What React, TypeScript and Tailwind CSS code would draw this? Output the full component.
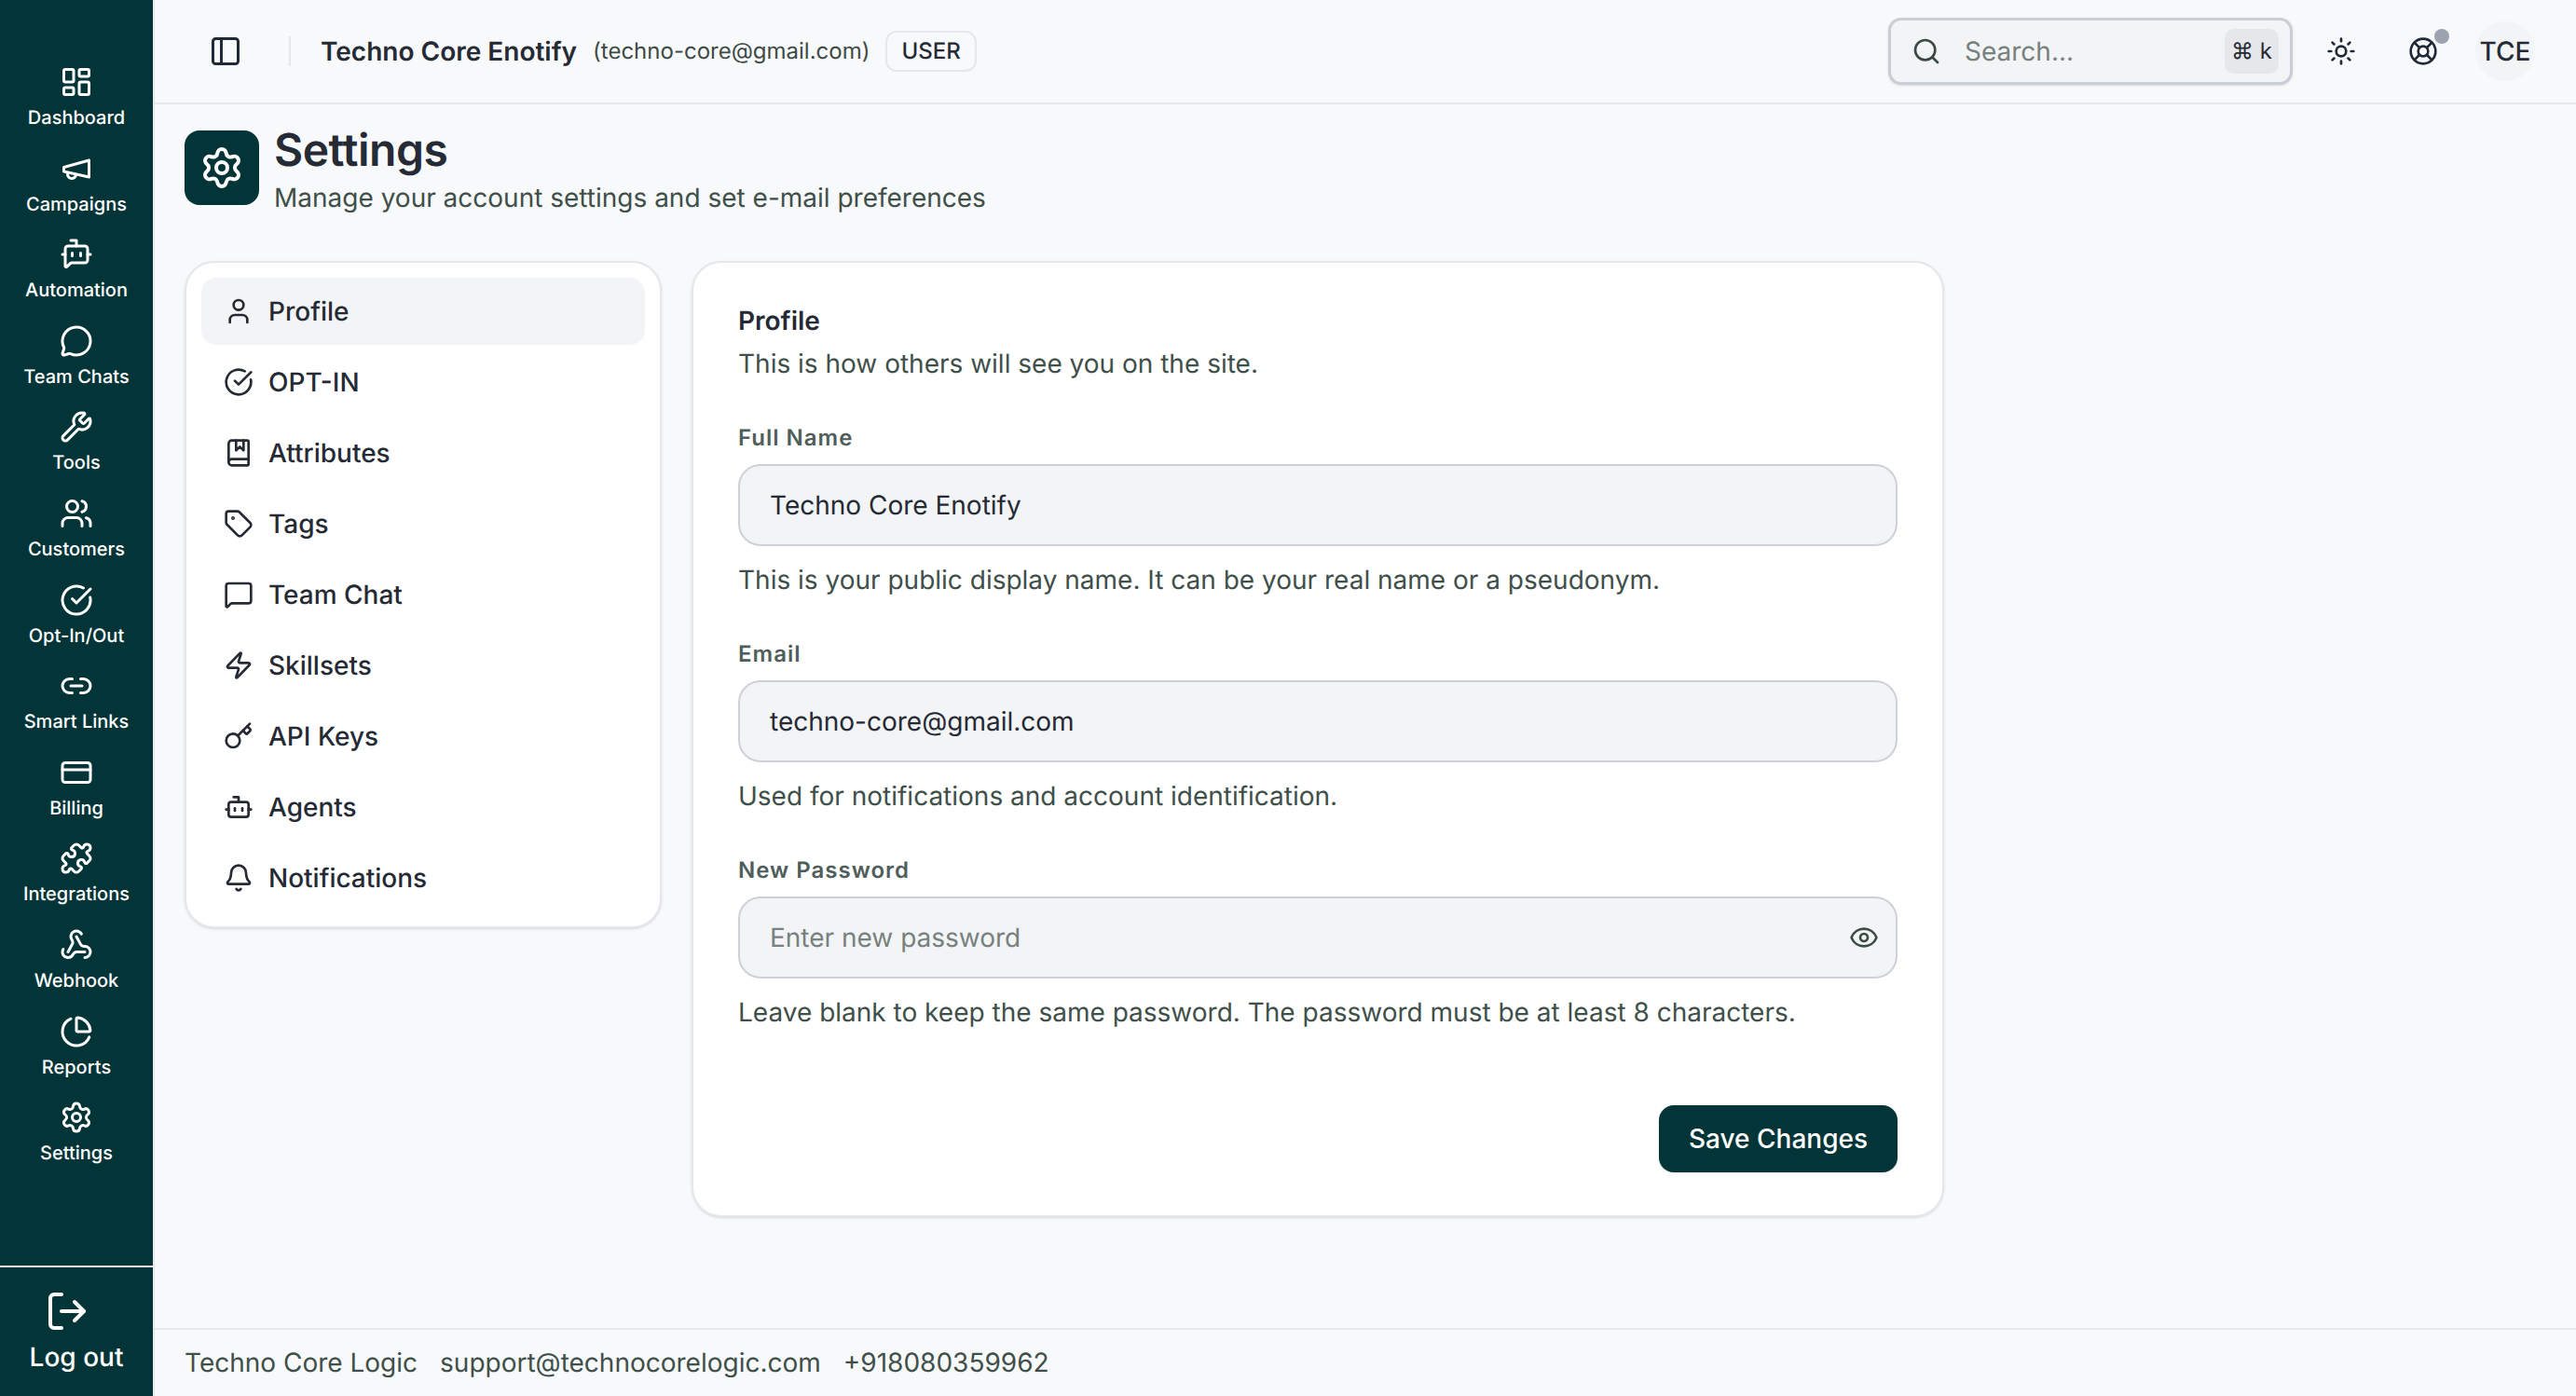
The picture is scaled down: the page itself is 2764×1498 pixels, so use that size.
import {
  Bell,
  BookMarked,
  Bot,
  BotMessageSquare,
  ChartPie,
  CircleCheckBig,
  CreditCard,
  Eye,
  Key,
  LayoutDashboard,
  LifeBuoy,
  Link2,
  LogOut,
  MessageCircle,
  MessageSquare,
  PanelLeft,
  Puzzle,
  Search,
  Settings,
  Sun,
  Tag,
  User,
  Users,
  Webhook,
  Wrench,
  Zap,
} from 'lucide-react';

function MegaphoneIcon({ className }: { className?: string }) {
  return (
    <svg
      viewBox="0 0 24 24"
      fill="none"
      stroke="currentColor"
      strokeWidth="2"
      strokeLinecap="round"
      strokeLinejoin="round"
      className={className}
    >
      <path d="m3 11 18-5v12L3 14v-3z" />
      <path d="M11.6 16.8a3 3 0 1 1-5.8-1.6" />
    </svg>
  );
}

const navItems = [
  { label: 'Dashboard', icon: LayoutDashboard },
  { label: 'Campaigns', icon: MegaphoneIcon },
  { label: 'Automation', icon: BotMessageSquare },
  { label: 'Team Chats', icon: MessageCircle },
  { label: 'Tools', icon: Wrench },
  { label: 'Customers', icon: Users },
  { label: 'Opt-In/Out', icon: CircleCheckBig },
  { label: 'Smart Links', icon: Link2 },
  { label: 'Billing', icon: CreditCard },
  { label: 'Integrations', icon: Puzzle },
  { label: 'Webhook', icon: Webhook },
  { label: 'Reports', icon: ChartPie },
  { label: 'Settings', icon: Settings },
];

const settingsItems = [
  { label: 'Profile', icon: User, active: true },
  { label: 'OPT-IN', icon: CircleCheckBig },
  { label: 'Attributes', icon: BookMarked },
  { label: 'Tags', icon: Tag },
  { label: 'Team Chat', icon: MessageSquare },
  { label: 'Skillsets', icon: Zap },
  { label: 'API Keys', icon: Key },
  { label: 'Agents', icon: Bot },
  { label: 'Notifications', icon: Bell },
];

function Sidebar() {
  return (
    <aside className="flex h-full w-[166px] shrink-0 flex-col border-r-2 border-[#e5e7eb] bg-[#033538] text-white">
      <nav className="flex flex-col pt-[70px]">
        {navItems.map((item) => (
          <div key={item.label} className="flex h-[92.6px] flex-col items-center">
            <item.icon className="h-[36px] w-[36px]" strokeWidth={2} />
            <span className="mt-[6px] text-[20px] leading-[28px] font-medium">{item.label}</span>
          </div>
        ))}
      </nav>
      <div className="mt-auto flex h-[140px] flex-col items-center border-t-2 border-[#e5e7eb] pt-[23px]">
        <LogOut className="mr-[20px] h-[48px] w-[48px]" strokeWidth={2} />
        <span className="mt-[5px] text-[28px] leading-[40px] font-medium">Log out</span>
      </div>
    </aside>
  );
}

function Header() {
  return (
    <header className="flex h-[112px] shrink-0 items-center border-b-2 border-[#e5e7eb] pr-[44px] pl-[58px]">
      <PanelLeft className="h-[36px] w-[36px] text-[#1f2937]" strokeWidth={2} />
      <div className="ml-[50px] h-[32px] w-[2px] bg-[#e5e7eb]" />
      <span className="ml-[32px] text-[28px] leading-[40px] font-semibold text-[#252a35]">Techno Core Enotify</span>
      <span className="ml-[17px] text-[24px] leading-[36px] text-[#3c4a45]">(techno-core@gmail.com)</span>
      <span className="ml-[17px] flex h-[44px] items-center rounded-[12px] border-2 border-[#e5e7eb] px-[15px] text-[24px] font-medium text-[#252a35]">
        USER
      </span>
      <div className="ml-auto flex h-[72px] w-[434px] items-center rounded-[14px] border-[3px] border-[#c9ced6] bg-[#f3f4f6] pr-[12px] pl-[22px] shadow-sm">
        <Search className="h-[32px] w-[32px] text-[#3c4a45]" strokeWidth={2} />
        <span className="ml-[25px] text-[28px] text-[#77817e]">Search...</span>
        <span className="ml-auto flex h-[48px] w-[58px] items-center justify-center rounded-[10px] bg-[#e5e7eb] text-[24px] text-[#252a35]">
          ⌘ k
        </span>
      </div>
      <Sun className="ml-[36px] h-[32px] w-[32px] text-[#1f2937]" strokeWidth={2} />
      <div className="relative ml-[56px]">
        <LifeBuoy className="h-[32px] w-[32px] text-[#1f2937]" strokeWidth={2} />
        <span className="absolute -top-[8px] -right-[12px] h-[16px] w-[16px] rounded-full bg-[#9ca3af]" />
      </div>
      <div className="ml-[40px] flex h-[64px] w-[64px] items-center justify-center rounded-full bg-[#f3f4f6] text-[28px] font-medium text-[#252a35]">
        TCE
      </div>
    </header>
  );
}

function Field({
  label,
  value,
  placeholder,
  hint,
  eye,
}: {
  label: string;
  value?: string;
  placeholder?: string;
  hint: string;
  eye?: boolean;
}) {
  return (
    <div className="flex flex-col">
      <label className="text-[24px] leading-[32px] font-semibold tracking-[1px] text-[#4f5e5c]">{label}</label>
      <div className="mt-[12px] flex h-[88px] items-center justify-between rounded-[24px] border-2 border-[#ced2d8] bg-[#f3f4f6] pr-[18px] pl-[32px] text-[28px]">
        <span className={value ? 'text-[#252a35]' : 'text-[#77817e]'}>{value ?? placeholder}</span>
        {eye && <Eye className="h-[32px] w-[32px] text-[#3c4a45]" strokeWidth={2} />}
      </div>
      <p className="mt-[16px] text-[28px] leading-[40px] text-[#3f4f4a]">{hint}</p>
    </div>
  );
}

export default function App() {
  return (
    <div className="flex h-screen w-full overflow-hidden bg-[#f8f9fb] font-['Inter',sans-serif] antialiased [text-rendering:geometricPrecision]">
      <Sidebar />
      <div className="flex min-w-0 flex-1 flex-col">
        <Header />
        <main className="flex-1 pt-[28px] pl-[32px]">
          <div className="flex items-stretch">
            <div className="flex h-[80px] w-[80px] items-center justify-center rounded-[16px] bg-[#033538] text-white">
              <Settings className="h-[48px] w-[48px]" strokeWidth={2} />
            </div>
            <div className="-mt-[10px] ml-[16px] flex flex-col">
              <h1 className="text-[48px] leading-[62px] font-semibold tracking-[-0.5px] text-[#252a35]">Settings</h1>
              <p className="text-[28px] leading-[40px] text-[#3f4f4a]">Manage your account settings and set e-mail preferences</p>
            </div>
          </div>

          <div className="mt-[48px] flex items-start gap-[32px]">
            <div className="flex w-[512px] flex-col gap-[4px] rounded-[32px] border-2 border-[#e5e7eb] bg-white p-[16px] shadow-sm">
              {settingsItems.map((item) => (
                <div
                  key={item.label}
                  className={`flex h-[72px] items-center gap-[16px] rounded-[16px] px-[24px] text-[28px] font-medium text-[#252a35] ${
                    item.active ? 'bg-[#f3f4f6]' : ''
                  }`}
                >
                  <item.icon className="h-[32px] w-[32px]" strokeWidth={2} />
                  {item.label}
                </div>
              ))}
            </div>

            <div className="flex w-[1344px] flex-col rounded-[32px] border-2 border-[#e5e7eb] bg-white px-[48px] pt-[42px] pb-[46px] shadow-sm">
              <h2 className="text-[28px] leading-[40px] font-semibold text-[#252a35]">Profile</h2>
              <p className="mt-[6px] text-[28px] leading-[40px] text-[#3f4f4a]">This is how others will see you on the site.</p>
              <div className="mt-[44px] flex flex-col gap-[44px]">
                <Field
                  label="Full Name"
                  value="Techno Core Enotify"
                  hint="This is your public display name. It can be your real name or a pseudonym."
                />
                <Field
                  label="Email"
                  value="techno-core@gmail.com"
                  hint="Used for notifications and account identification."
                />
                <Field
                  label="New Password"
                  placeholder="Enter new password"
                  eye
                  hint="Leave blank to keep the same password. The password must be at least 8 characters."
                />
              </div>
              <button className="mt-[80px] ml-auto h-[72px] w-[256px] rounded-[16px] bg-[#033538] text-[28px] font-medium text-white shadow-sm">
                Save Changes
              </button>
            </div>
          </div>
        </main>
        <footer className="flex h-[73px] shrink-0 items-center gap-[24px] border-t-2 border-[#e5e7eb] pb-[2px] pl-[32px] text-[28px] text-[#3f4f4a]">
          <span>Techno Core Logic</span>
          <span>support@technocorelogic.com</span>
          <span>+918080359962</span>
        </footer>
      </div>
    </div>
  );
}
